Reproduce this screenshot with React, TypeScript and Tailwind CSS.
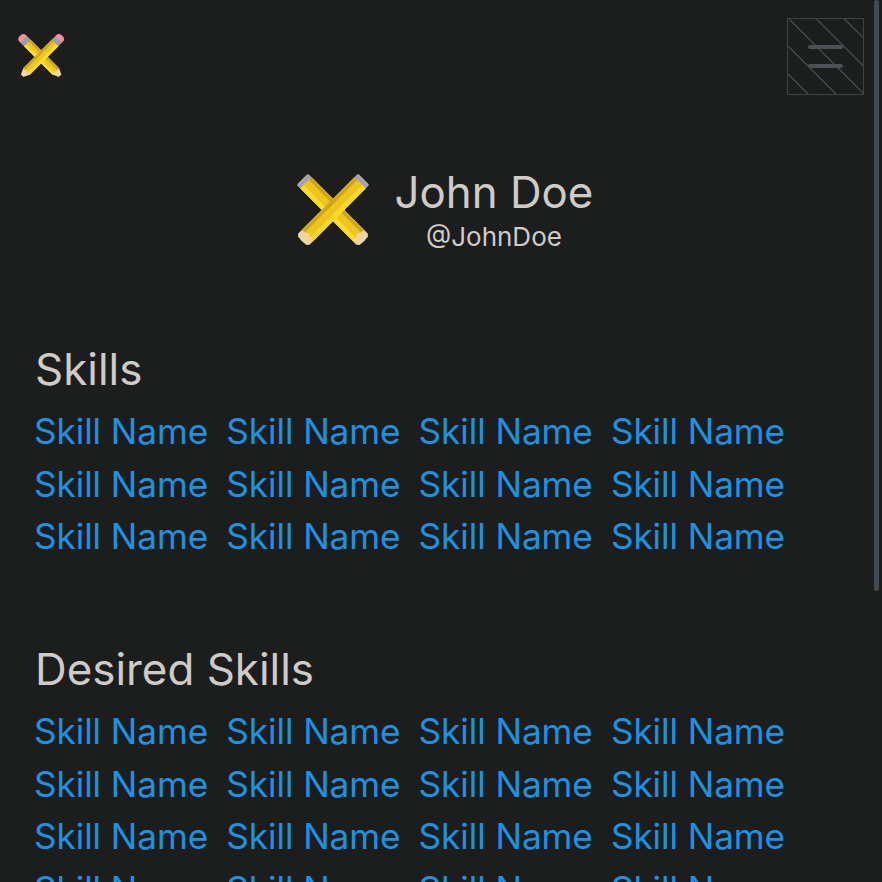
import React from "react";

function SmallPencil() {
  return (
    <g>
      <path d="M-14 10V5Q-14 -7 0 -7Q14 -7 14 5V10Z" fill="#fb8da2" />
      <rect x="-14" y="9" width="28" height="15" fill="#a3a3a6" />
      <path d="M-14 13.500H14M-14 19.500H14" stroke="#88898c" strokeWidth="1.500" />
      <path d="M-14 24H14V144L0 175L-14 144Z" fill="#f6d9a2" />
      <path d="M-14 24H-5V143L-14 147Z" fill="#d0a914" />
      <path d="M-5 24H5V147L0 142L-5 147Z" fill="#efc61b" />
      <path d="M5 24H14V147L5 143Z" fill="#fedb2b" />
      <path d="M-5.500 163L0 175.500L5.500 163Z" fill="#090909" />
    </g>
  );
}

function Logo() {
  return (
    <svg className="size-16" viewBox="0 0 192 192" aria-hidden="true">
      <g transform="translate(35 37) scale(-1 1) rotate(45)">
        <SmallPencil />
      </g>
      <g transform="translate(152 37) rotate(45)">
        <SmallPencil />
      </g>
    </svg>
  );
}

function LargePencil() {
  return (
    <g>
      <path d="M-24 1L-20 -2H20L24 1V14H-24Z" fill="#aaa9ae" />
      <path d="M-22 7H22" stroke="#89898d" strokeWidth="2" />
      <path d="M-24 14H24V252L18 259Q0 263 -18 259L-24 252Z" fill="#f2d59e" />
      <path d="M-24 14H-11V236L-17 235L-24 243Z" fill="#cda714" />
      <path d="M-11 14H10V236L0 229L-11 236Z" fill="#efc51b" />
      <path d="M10 14H24V243L17 235L10 236Z" fill="#fdd92a" />
    </g>
  );
}

function Avatar() {
  return (
    <svg className="h-[90px] w-[95px] shrink-0" viewBox="0 0 285 270" aria-hidden="true">
      <g transform="translate(53 44) scale(-1 1) rotate(45)">
        <LargePencil />
      </g>
      <g transform="translate(235 44) rotate(45)">
        <LargePencil />
      </g>
    </svg>
  );
}

function MenuButton() {
  return (
    <button type="button" aria-label="Menu" className="size-[77px]">
      <svg className="size-full" viewBox="0 0 77 77" fill="none">
        <path
          d="M2 1L76 75M29.500 1L76 47.500M57.500 1L76 19.500M1 28L49 76M1 56L21 76"
          stroke="#43484b"
          strokeWidth="1.500"
        />
        <rect x="0.500" y="0.500" width="76" height="76" stroke="#3e4346" />
        <path d="M23 29H54M23 48H54" stroke="#4c5156" strokeWidth="4" strokeLinecap="round" />
      </svg>
    </button>
  );
}

function SkillSection({ title, rows }: { title: string; rows: number }) {
  return (
    <section className="h-[300px]">
      <h2 className="pl-px text-[43.900px] leading-[52px] text-[#cecbc8]">{title}</h2>
      <ul className="mt-[10px] grid grid-cols-[repeat(4,192.300px)] text-[35.200px] leading-[52.500px] tracking-[-0.080px] text-[#1d92e3]">
        {Array.from({ length: rows * 4 }, (_, i) => (
          <li key={i} className="whitespace-nowrap">Skill Name</li>
        ))}
      </ul>
    </section>
  );
}

export default function App() {
  return (
    <div className="flex h-[882px] w-[882px] overflow-hidden bg-[#1c1e1d] font-['Inter',sans-serif]">
      <div className="w-[873px] shrink-0">
        <header className="flex h-[165px] items-start justify-between pr-[9px] pl-[10px]">
          <div className="pt-[25px]">
            <Logo />
          </div>
          <div className="pt-[18px]">
            <MenuButton />
          </div>
        </header>
        <div className="flex h-[178px] items-start pl-[285px] text-[#cecbc8]">
          <Avatar />
          <div className="ml-[14px] w-[200px] text-center">
            <h1 className="pt-px text-[43.800px] leading-[54px] whitespace-nowrap">John Doe</h1>
            <p className="text-[26px] leading-[34px]">@JohnDoe</p>
          </div>
        </div>
        <main className="pl-[34px]">
          <SkillSection title="Skills" rows={3} />
          <SkillSection title="Desired Skills" rows={4} />
        </main>
      </div>
      <div className="ml-[0.700px] h-[591px] w-[5.600px] rounded-full bg-[#434a4e]" />
    </div>
  );
}
